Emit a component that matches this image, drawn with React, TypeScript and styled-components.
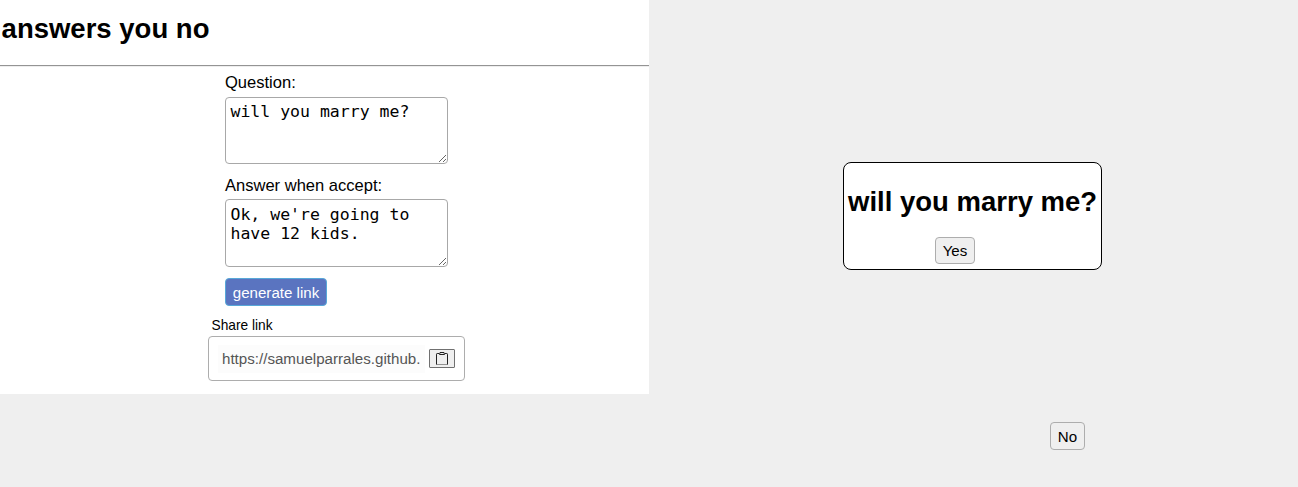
import React from "react";
import styled, { createGlobalStyle } from "styled-components";

const GlobalStyle = createGlobalStyle`
  * { box-sizing: border-box; }
  body {
    margin: 0;
    background: #efefef;
    color: #000;
    font-family: "Liberation Sans", Arial, sans-serif;
    overflow: hidden;
  }
`;

const Page = styled.div`
  display: grid;
  grid-template-columns: 649px 1fr;
  align-items: start;
  height: 487px;
`;

const Editor = styled.main`
  height: 394px;
  background: #fff;
`;

const Header = styled.header`
  height: 67px;
  padding: 12px 0 0 1.6px;
  border-bottom: 1px solid #eee;
  box-shadow: inset 0 -1px 0 #949494;
`;

const Title = styled.h1`
  margin: 0;
  font-size: 27.5px;
  line-height: 33px;
  white-space: nowrap;
`;

const Form = styled.form`
  display: flex;
  flex-direction: column;
  align-items: flex-start;
  padding: 6px 0 0 225px;
`;

const Field = styled.label<{ $height: number; $gap: number; $labelGap: number; $inset: number }>`
  display: flex;
  flex-direction: column;
  margin-bottom: ${(p) => p.$gap}px;
  font-size: 16.55px;
  line-height: 20px;

  textarea {
    display: block;
    width: 223px;
    height: ${(p) => p.$height}px;
    margin: ${(p) => p.$labelGap}px 0 0;
    padding: ${(p) => p.$inset}px 4.5px 0;
    border: 1px solid #a8a8a8;
    border-radius: 4px;
    background: #fff;
    color: #000;
    font: 16.5px/19px "DejaVu Sans Mono", monospace;
    outline: none;
    overflow: auto;
  }
`;

const Button = styled.button<{ $primary?: boolean; $width: number; $height: number }>`
  width: ${(p) => p.$width}px;
  height: ${(p) => p.$height}px;
  padding: 1px 0 0;
  border: 1px solid ${(p) => (p.$primary ? "#58a8d8" : "#adadad")};
  border-radius: 4px;
  background: ${(p) => (p.$primary ? "#5a74c0" : "#efefef")};
  color: ${(p) => (p.$primary ? "#fff" : "#000")};
  font: 15.1px/18px "Liberation Sans", Arial, sans-serif;
  white-space: nowrap;
`;

const Share = styled.section`
  width: 257px;
  margin: 11px 0 0 208px;
`;

const ShareLabel = styled.div`
  height: 19px;
  padding-left: 3.5px;
  font-size: 13.75px;
  line-height: 17px;
`;

const LinkBox = styled.div`
  display: flex;
  align-items: center;
  height: 45px;
  padding: 0 9px;
  border: 1px solid #adadad;
  border-radius: 4px;
`;

const LinkInput = styled.input`
  width: 207px;
  height: 28px;
  margin-right: 4px;
  padding: 0 4px 1px;
  border: 0;
  background: #fcfcfc;
  color: #555;
  font: 15.13px "Liberation Sans", Arial, sans-serif;
  outline: none;
`;

const CopyButton = styled.button`
  display: flex;
  align-items: center;
  justify-content: center;
  flex: none;
  width: 26px;
  height: 19px;
  padding: 0;
  border: 1px solid #707070;
  border-radius: 1px;
  background: #efefef;
`;

const Preview = styled.aside`
  display: flex;
  flex-direction: column;
  align-items: flex-start;
  padding: 162px 0 0 194px;
`;

const Card = styled.section`
  display: flex;
  flex-direction: column;
  width: 259px;
  height: 108px;
  padding: 22px 4px 0;
  border: 1px solid #000;
  border-radius: 8px;
  background: #fff;
`;

const Actions = styled.div`
  padding: 19px 0 0 87px;
`;

const Escape = styled.div`
  margin: 152px 0 0 207px;
`;

export default function App() {
  return (
    <>
      <GlobalStyle />
      <Page>
        <Editor>
          <Header>
            <Title>answers you no</Title>
          </Header>
          <Form onSubmit={(e) => e.preventDefault()}>
            <Field $height={67} $gap={12} $labelGap={4} $inset={4}>
              Question:
              <textarea defaultValue="will you marry me?" spellCheck={false} />
            </Field>
            <Field $height={68} $gap={11} $labelGap={3} $inset={5}>
              Answer when accept:
              <textarea defaultValue="Ok, we're going to have 12 kids." spellCheck={false} />
            </Field>
            <Button $primary $width={102} $height={28}>generate link</Button>
          </Form>
          <Share>
            <ShareLabel>Share link</ShareLabel>
            <LinkBox>
              <LinkInput readOnly value="https://samuelparrales.github." />
              <CopyButton aria-label="Copy link">
                <svg width="14" height="15" viewBox="0 0 14 15" fill="none" stroke="#222">
                  <path d="M4 2.5H2.2Q1.5 2.5 1.5 3.2V13.5" />
                  <path d="M10 2.5H11.8Q12.5 2.5 12.5 3.2V13.5" />
                  <path d="M1.5 13.5H12.5" strokeOpacity="0.45" />
                  <path d="M4.5 3.5L5 1.5H9L9.5 3.5Z" />
                </svg>
              </CopyButton>
            </LinkBox>
          </Share>
        </Editor>
        <Preview>
          <Card>
            <Title>will you marry me?</Title>
            <Actions>
              <Button $width={40} $height={27}>Yes</Button>
            </Actions>
          </Card>
          <Escape>
            <Button $width={35} $height={28}>No</Button>
          </Escape>
        </Preview>
      </Page>
    </>
  );
}
